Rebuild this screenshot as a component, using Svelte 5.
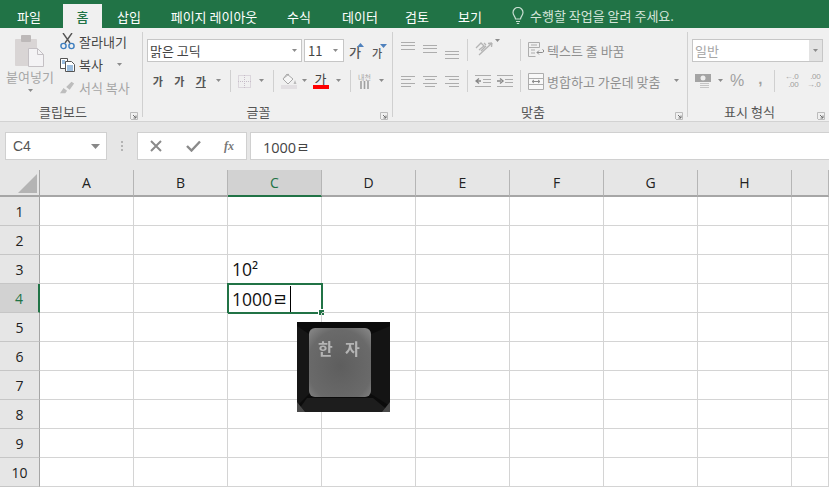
<script>
  const tabs = [
    { label: '파일', w: 58, gap: 5 },
    { label: '홈', w: 39, on: true },
    { label: '삽입', w: 54 },
    { label: '페이지 레이아웃', w: 116 },
    { label: '수식', w: 54 },
    { label: '데이터', w: 68 },
    { label: '검토', w: 46 },
    { label: '보기', w: 60 }
  ];
  const cols = ['A', 'B', 'C', 'D', 'E', 'F', 'G', 'H', ''];
  const rows = [1, 2, 3, 4, 5, 6, 7, 8, 9, 10];

  // three or four grey lines, the ribbon's alignment icons
  function alignLines(widths, anchor, top) {
    return widths.map((w, i) => {
      const x = anchor === 'c' ? (16 - w) / 2 : anchor === 'r' ? 15 - w : 1;
      return { x, y: top + Math.round(i * 3.4) + 0.5, w };
    });
  }
</script>

{#snippet arrow(x = 0)}
  <svg class="arr" style="margin-left:{x}px" width="7" height="4" viewBox="0 0 7 4"><path d="M1 0h5L3.500 3z" fill="#8c8c8c" /></svg>
{/snippet}

{#snippet launcher()}
  <svg class="launch" width="8" height="8" viewBox="0 0 8 8"><path d="M.5 7V.5H7.500V7.500H1" fill="none" stroke="#bcbcbc" /><path d="M3 3l3 3M6 3.500V6H3.500" fill="none" stroke="#707070" /></svg>
{/snippet}

{#snippet lines(widths, anchor, top)}
  <svg width="16" height="20" viewBox="0 0 16 20" fill="none" stroke="#adadad">
    {#each alignLines(widths, anchor, top) as l}
      <path d="M{l.x} {l.y}h{l.w}" />
    {/each}
  </svg>
{/snippet}

<div class="app">
  <nav class="tabs">
    {#each tabs as t}
      <span class="tab" class:on={t.on} style="width:{t.w}px;margin-right:{t.gap ?? 0}px">{t.label}</span>
    {/each}
    <span class="tell">
      <svg width="14" height="18" viewBox="0 0 14 18" fill="none" stroke="#c9dfd2" stroke-width="1.200"><path d="M4.500 12c0-2.500-2.500-3.500-2.500-6.500a5 5 0 0 1 10 0c0 3-2.500 4-2.500 6.500zM5 14.500h4M5.800 16.500h2.400" /></svg>
      수행할 작업을 알려 주세요.
    </span>
  </nav>

  <section class="ribbon">
    <div class="group g-clip">
      <div class="body clip">
        <div class="paste">
          <svg width="30" height="32" viewBox="0 0 30 32">
            <rect x="0" y="4" width="22" height="27" rx="1" fill="#d9d5d5" />
            <rect x="6" y="0" width="10" height="7" rx="1" fill="#bdb9b9" />
            <path d="M13.500 13.500h9l6 6v12h-15z" fill="#f4f3f5" stroke="#c4c0c4" />
            <path d="M22.500 13.500v6h6" fill="none" stroke="#c4c0c4" />
          </svg>
          <span>붙여넣기</span>
          {@render arrow()}
        </div>
        <div class="clip-list">
          <div class="on-item">
            <svg width="15" height="17" viewBox="0 0 15 17" fill="none"><path d="M3 0l7 10M12 0L5 10" stroke="#555" stroke-width="1.400" /><circle cx="3.500" cy="13" r="2.600" stroke="#3d7ebf" stroke-width="1.400" /><circle cx="11.500" cy="13" r="2.600" stroke="#3d7ebf" stroke-width="1.400" /></svg>
            잘라내기
          </div>
          <div class="on-item">
            <svg width="15" height="15" viewBox="0 0 15 15" fill="#fff" stroke="#555"><path d="M.5 1.500h7v10h-7z" /><path d="M5.500 4.500h6l3 3v7h-9z" /><path d="M7 9h6M7 11h6M7 13h6M2 4h3M2 6h3" stroke="#3d7ebf" /></svg>
            복사
            {@render arrow(9)}
          </div>
          <div class="off-item">
            <svg width="15" height="14" viewBox="0 0 17 14"><path d="M0 13l4-6 4 3-2 3zM7 6l6-6 3 2-5 7z" fill="#bdbdbd" /></svg>
            서식 복사
          </div>
        </div>
      </div>
      <footer class="f-clip">클립보드 {@render launcher()}</footer>
    </div>

    <div class="group g-font">
      <div class="body stack">
        <div class="row r-top">
          <span class="field font-name">맑은 고딕 {@render arrow()}</span>
          <span class="field font-size">11 {@render arrow()}</span>
          <span class="grow">
            가<svg width="7" height="4" viewBox="0 0 7 4"><path d="M0 4h7L3.500 0z" fill="#4f81bd" /></svg>
          </span>
          <span class="grow small">
            가<svg width="7" height="4" viewBox="0 0 7 4"><path d="M0 0h7L3.500 4z" fill="#4f81bd" /></svg>
          </span>
        </div>
        <div class="row r-low font-low">
          <b class="style">가</b>
          <i class="style">가</i>
          <u class="style">가</u>
          {@render arrow(3)}
          <span class="vsep"></span>
          <svg width="13" height="13" viewBox="0 0 13 13" fill="none" stroke="#c6bcc8" stroke-dasharray="1 1"><path d="M.5.5h12v12H.5zM6.500 0v13M0 6.500h13" /></svg>
          {@render arrow(7)}
          <span class="vsep"></span>
          <span class="paint">
            <svg width="16" height="12" viewBox="0 0 16 12" fill="#f6f6f6" stroke="#a8a8a8"><path d="M6 1l6 5-5 5-5-5zM3 5l5-4" /><path d="M14 7l1.500 4h-3z" fill="#bbb" stroke="none" /></svg>
            <i></i>
          </span>
          {@render arrow(4)}
          <span class="fcolor">가<i></i></span>
          {@render arrow(6)}
          <span class="vsep"></span>
          <span class="phon"><small>내천</small><svg width="11" height="8" viewBox="0 0 11 8" stroke="#a0a0a0" stroke-width="1.600"><path d="M2 0v8M5.500 0v8M9 0v8" /></svg></span>
          {@render arrow(6)}
        </div>
      </div>
      <footer class="f-font">글꼴 {@render launcher()}</footer>
    </div>

    <div class="group g-align">
      <div class="body stack">
        <div class="row r-top al-row">
          <span class="al">{@render lines([14, 14, 14], 'l', 3)}</span>
          <span class="al">{@render lines([14, 14, 14], 'l', 6)}</span>
          <span class="al">{@render lines([14, 14, 14], 'l', 12)}</span>
          <span class="vsep s-a"></span>
          <svg class="orient" width="18" height="17" viewBox="0 0 18 17" fill="none" stroke="#b4b4b4" stroke-width="1.300"><path d="M1 9l5-5 3 3-5 4M6 12l5-5M9 4l2 2M4 16L17 4M17 4l-4 .500M17 4l-.500 4" /></svg>
          {@render arrow(1)}
          <span class="vsep s-b"></span>
          <span class="wrap top">
            <svg width="16" height="16" viewBox="0 0 16 16" fill="none" stroke="#adadad"><path d="M.5.5h11v5H.5zM.5 5.500v9h7M3 3h6M3 8h4M3 11h4" /><path d="M9 10.500h5.500c1.500 0 1.500-3 0-3M11 8.500l-2 2 2 2" stroke="#8c8c8c" /></svg>
            텍스트 줄 바꿈
          </span>
        </div>
        <div class="row r-low al-row">
          <span class="al">{@render lines([14, 10, 14, 10], 'l', 5)}</span>
          <span class="al">{@render lines([14, 10, 14, 10], 'c', 5)}</span>
          <span class="al">{@render lines([14, 10, 14, 10], 'r', 5)}</span>
          <span class="vsep s-a"></span>
          <svg class="ind" width="16" height="12" viewBox="0 0 16 12" fill="none" stroke="#adadad"><path d="M0 .5h16M8 4.500h8M8 7.500h8M0 11.500h16" /><path d="M6 6H2M4 3.500L1 6l3 2.500" stroke="#888" stroke-width="1.400" /></svg>
          <svg class="ind" width="16" height="12" viewBox="0 0 16 12" fill="none" stroke="#adadad"><path d="M0 .5h16M8 4.500h8M8 7.500h8M0 11.500h16" /><path d="M0 6h4M3 3.500L6 6 3 8.500" stroke="#888" stroke-width="1.400" /></svg>
          <span class="vsep s-c"></span>
          <span class="wrap">
            <svg width="16" height="17" viewBox="0 0 16 17" fill="#f8f8f8" stroke="#adadad"><path d="M.5.5h15v16H.5zM.5 5.500h15M.5 11.500h15" /><path d="M4 8.500h8M4 8.500l2-1.500M4 8.500l2 1.500M12 8.500L10 7M12 8.500L10 10" stroke="#8c8c8c" fill="none" /></svg>
            병합하고 가운데 맞춤
            {@render arrow(10)}
          </span>
        </div>
      </div>
      <footer class="f-align">맞춤 {@render launcher()}</footer>
    </div>

    <div class="group g-num">
      <div class="body stack">
        <div class="row r-top">
          <span class="field num-field"><em>일반</em><span class="drop">{@render arrow()}</span></span>
        </div>
        <div class="row r-low num-low">
          <svg width="18" height="15" viewBox="0 0 18 15"><rect x="0" y="0" width="16" height="8" fill="#a4a4a4" /><circle cx="8" cy="4" r="2.500" fill="#eee" /><path d="M5 9.500h9M5 11.500h9M5 13.500h9" stroke="#c4c4c4" /></svg>
          {@render arrow(4)}
          <span class="pct">%</span>
          <span class="comma">,</span>
          <span class="vsep s-n"></span>
          <span class="dec"><small>←.0</small><small>.00</small></span>
          <span class="dec d2"><small>.00</small><small>→.0</small></span>
        </div>
      </div>
      <footer class="f-num">표시 형식 {@render launcher()}</footer>
    </div>
  </section>

  <section class="fbar">
    <div class="name">C4 <svg width="9" height="5" viewBox="0 0 9 5"><path d="M0 0h9L4.500 5z" fill="#888" /></svg></div>
    <span class="dots"><i></i><i></i><i></i></span>
    <div class="btns">
      <svg width="12" height="12" viewBox="0 0 12 12" stroke="#8a8a8a" stroke-width="2"><path d="M1 1l10 10M11 1L1 11" /></svg>
      <svg width="15" height="12" viewBox="0 0 15 12" fill="none" stroke="#8a8a8a" stroke-width="2.400"><path d="M1 6l4.500 4.500L14 1.500" /></svg>
      <span class="fx">fx</span>
    </div>
    <div class="input">1000ㄹ</div>
  </section>

  <section class="sheet">
    <span class="corner"><svg width="19" height="19" viewBox="0 0 19 19"><path d="M19 0v19H0z" fill="#b4b4b4" /></svg></span>
    {#each cols as c}
      <span class="ch" class:sel={c === 'C'}>{c}</span>
    {/each}
    {#each rows as r}
      <span class="rh" class:sel={r === 4}>{r}</span>
      {#each cols as c}
        <span class="cell">
          {#if c === 'C' && r === 3}10²{/if}
          {#if c === 'C' && r === 4}
            <span class="editor">1000ㄹ<i class="caret"></i><i class="handle"></i></span>
          {/if}
        </span>
      {/each}
    {/each}

    <svg class="key" width="93" height="90" viewBox="0 0 93 90">
      <defs>
        <radialGradient id="cap" cx="0.5" cy="0.55" r="0.75">
          <stop offset="0" stop-color="#5e5e5e" />
          <stop offset="0.7" stop-color="#6a6a6a" />
          <stop offset="1" stop-color="#8c8c8c" />
        </radialGradient>
      </defs>
      <rect width="93" height="90" fill="#0b0b0b" />
      <path d="M0 4L12 12V72L0 84z" fill="#161616" />
      <path d="M93 4L74 12V72L93 84z" fill="#141414" />
      <path d="M10 76H76L93 90H0z" fill="#1d1d1d" />
      <path d="M0 80L8 90H0zM93 80L85 90H93z" fill="#4a4a4a" />
      <rect x="12" y="6" width="62" height="69" rx="6" fill="url(#cap)" />
      <text x="21" y="33" class="kt">한</text>
      <text x="48" y="33" class="kt">자</text>
    </svg>
  </section>
</div>

<style>
  :global(body) {
    margin: 0;
    overflow: hidden;
  }
  .app {
    width: 829px;
    height: 487px;
    overflow: hidden;
    background: #e6e6e6;
    font-family: "Noto Sans CJK KR", "Liberation Sans", sans-serif;
    font-size: 13px;
    color: #444;
  }
  .tabs {
    display: flex;
    height: 28px;
    background: #217346;
    color: #fff;
  }
  .tab {
    display: flex;
    align-items: center;
    justify-content: center;
    margin-top: 4px;
    height: 24px;
    flex: none;
    box-sizing: border-box;
  }
  .tab.on {
    background: #f0f0f0;
    color: #217346;
    font-weight: 500;
  }
  .tell {
    display: flex;
    align-items: center;
    gap: 5px;
    margin-left: 11px;
    margin-top: 3px;
    color: #d4e5da;
  }
  .ribbon {
    display: flex;
    height: 89px;
    padding-top: 4px;
    background: #f0f0f0;
    border-bottom: 1px solid #d2d2d2;
  }
  .group {
    display: flex;
    flex-direction: column;
    height: 85px;
    border-right: 1px solid #d0d0d0;
    box-sizing: border-box;
    flex: none;
  }
  .g-clip { width: 143px; }
  .g-font { width: 250px; }
  .g-align { width: 295px; }
  .g-num { width: 141px; border-right: 0; }
  .body {
    flex: none;
    height: 70px;
  }
  svg {
    flex: none;
  }
  footer {
    position: relative;
    flex: none;
    height: 20px;
    text-align: center;
    line-height: 19px;
    color: #555;
  }
  .f-clip { padding-right: 16px; }
  .f-font { padding-right: 18px; }
  .f-align { padding-right: 14px; }
  .f-num { padding-right: 18px; }
  .launch {
    position: absolute;
    right: 4px;
    top: 10px;
  }
  .clip {
    display: flex;
  }
  .paste {
    width: 60px;
    display: flex;
    flex-direction: column;
    align-items: center;
    padding-top: 3px;
    color: #a6a6a6;
    box-sizing: border-box;
  }
  .paste span {
    margin-top: 1px;
    line-height: 18px;
  }
  .paste .arr {
    margin-top: 3px;
  }
  .clip-list {
    display: flex;
    flex-direction: column;
    margin-top: -2px;
  }
  .on-item, .off-item {
    display: flex;
    align-items: center;
    height: 23px;
    gap: 4px;
    white-space: nowrap;
  }
  .on-item { color: #444; }
  .off-item { color: #a6a6a6; }
  .stack {
    display: flex;
    flex-direction: column;
  }
  .row {
    display: flex;
    align-items: center;
    flex: none;
  }
  .r-top {
    height: 30px;
    margin-top: 7px;
    padding-left: 4px;
    align-items: flex-start;
  }
  .r-low {
    height: 24px;
    padding-left: 4px;
  }
  .field {
    display: flex;
    align-items: center;
    box-sizing: border-box;
    height: 23px;
    background: #fff;
    border: 1px solid #c6c6c6;
    color: #444;
  }
  .font-name {
    width: 155px;
    justify-content: space-between;
    padding: 0 3px 0 2px;
  }
  .font-size {
    width: 40px;
    margin-left: 2px;
    justify-content: space-between;
    padding: 0 4px 0 3px;
  }
  .grow {
    display: flex;
    position: relative;
    width: 13px;
    margin-left: 5px;
    margin-top: 4px;
    font-size: 13px;
    font-weight: 500;
    line-height: 18px;
    color: #555;
  }
  .grow svg {
    position: absolute;
    right: -2px;
    top: 0;
  }
  .grow.small {
    margin-left: 10px;
    font-size: 11px;
    top: 1px;
  }
  .style {
    width: 21.500px;
    text-align: center;
    font-size: 11px;
    font-weight: 700;
    font-style: normal;
    color: #555;
    text-decoration: none;
    flex: none;
  }
  u.style {
    text-decoration: underline;
  }
  .vsep {
    width: 1px;
    height: 22px;
    background: #d0d0d0;
    margin: 0 7px 0 8px;
    flex: none;
  }
  .paint {
    display: flex;
    flex-direction: column;
    width: 16px;
    flex: none;
  }
  .paint i {
    height: 4px;
    background: #e2dfe2;
  }
  .fcolor {
    display: flex;
    flex-direction: column;
    align-items: center;
    width: 16px;
    margin-left: 5px;
    font-size: 13px;
    line-height: 12px;
    color: #444;
    flex: none;
  }
  .fcolor i {
    width: 16px;
    height: 4px;
    background: #f00;
  }
  .phon {
    display: flex;
    flex-direction: column;
    align-items: center;
    width: 14px;
    color: #a6a6a6;
    flex: none;
  }
  .phon small {
    font-size: 7px;
    line-height: 8px;
  }
  .al {
    display: flex;
    width: 22px;
    justify-content: center;
    flex: none;
  }
  .al-row .vsep.s-a { margin: 0 7px 0 4px; }
  .al-row .vsep.s-b { margin: 0 7px 0 19px; }
  .al-row .vsep.s-c { margin: 0 7px 0 1px; }
  .ind { margin-right: 6px; }
  .wrap {
    display: flex;
    align-items: center;
    gap: 3px;
    height: 20px;
    color: #909090;
    white-space: nowrap;
  }
  .wrap.top {
    margin-top: 1px;
  }
  .num-field {
    width: 131px;
    justify-content: space-between;
    padding-left: 2px;
  }
  .num-field em {
    font-style: normal;
    color: #a6a6a6;
  }
  .drop {
    display: flex;
    align-items: center;
    justify-content: center;
    width: 13px;
    height: 21px;
    background: #e3e3e3;
  }
  .num-low {
    padding-left: 7px;
    color: #a0a0a0;
  }
  .pct {
    margin-left: 6px;
    font: 16px "Liberation Sans", sans-serif;
  }
  .comma {
    margin-left: 14px;
    font: 700 15px "Liberation Sans", sans-serif;
    position: relative;
    top: -3px;
  }
  .vsep.s-n {
    margin: 0 8px 0 12px;
  }
  .dec {
    display: flex;
    flex-direction: column;
    width: 15px;
    font-family: "Liberation Sans", sans-serif;
    text-align: right;
    white-space: nowrap;
  }
  .d2 {
    margin-left: 7px;
  }
  .dec small {
    font-size: 8px;
    line-height: 8px;
    letter-spacing: -0.3px;
  }
  .fbar {
    display: flex;
    align-items: stretch;
    height: 28px;
    margin-top: 10px;
    padding-left: 5px;
  }
  .name, .btns, .input {
    box-sizing: border-box;
    background: #fff;
    border: 1px solid #d0d0d0;
    display: flex;
    align-items: center;
  }
  .name {
    width: 102px;
    justify-content: space-between;
    padding: 0 6px 0 7px;
    font: 14px "Liberation Sans", sans-serif;
    color: #555;
  }
  .dots {
    display: flex;
    flex-direction: column;
    justify-content: center;
    gap: 2px;
    width: 30px;
    align-items: center;
  }
  .dots i {
    width: 2px;
    height: 2px;
    background: #b4b4b4;
  }
  .btns {
    width: 110px;
    justify-content: space-between;
    padding: 0 12px;
  }
  .fx {
    font: italic 700 12px "Liberation Serif", serif;
    color: #777;
  }
  .input {
    flex: 1;
    margin-left: 3px;
    padding-left: 12px;
    border-right: 0;
    color: #444;
    font-family: "Open Sans", "Noto Sans CJK KR", sans-serif;
    font-size: 14.500px;
  }
  .sheet {
    position: relative;
    display: grid;
    grid-template-columns: 40px repeat(8, 94px) 1fr;
    grid-template-rows: 27px repeat(10, 29px);
    margin-top: 10px;
    background: #fff;
    font-family: "Open Sans", "Noto Sans CJK KR", sans-serif;
  }
  .corner {
    display: flex;
    align-items: flex-end;
    justify-content: flex-end;
    background: #e6e6e6;
    border-right: 1px solid #a6a6a6;
    border-bottom: 2px solid #a6a6a6;
    padding: 0 2px 2px 0;
    box-sizing: border-box;
  }
  .ch {
    display: flex;
    align-items: center;
    justify-content: center;
    background: #e6e6e6;
    border-right: 1px solid #b5b5b5;
    border-bottom: 2px solid #a6a6a6;
    box-sizing: border-box;
    font-size: 14px;
    color: #222;
  }
  .ch.sel {
    background: #d2d2d2;
    border-bottom-color: #217346;
    color: #217346;
  }
  .rh {
    display: flex;
    align-items: center;
    justify-content: center;
    background: #e6e6e6;
    border-right: 1px solid #a6a6a6;
    border-bottom: 1px solid #c6c6c6;
    box-sizing: border-box;
    font-size: 14px;
    color: #222;
  }
  .rh.sel {
    background: #d2d2d2;
    color: #217346;
    border-right: 2px solid #217346;
  }
  .cell {
    position: relative;
    display: flex;
    align-items: center;
    padding-left: 4px;
    box-sizing: border-box;
    border-right: 1px solid #d4d4d4;
    border-bottom: 1px solid #d4d4d4;
    font-size: 17.500px;
    color: #111;
  }
  .editor {
    position: absolute;
    left: -1px;
    top: -1px;
    width: 96px;
    height: 31px;
    box-sizing: border-box;
    display: flex;
    align-items: center;
    padding-left: 3px;
    background: #fff;
    border: 2px solid #217346;
    white-space: pre;
  }
  .caret {
    width: 1px;
    height: 26px;
    margin-left: 2px;
    background: #000;
  }
  .handle {
    position: absolute;
    right: -3px;
    bottom: -3px;
    width: 5px;
    height: 5px;
    background: #217346;
    border: 1px solid #fff;
    border-width: 1px 0 0 1px;
  }
  .key {
    position: absolute;
    left: 297px;
    top: 152px;
    z-index: 2;
  }
  .kt {
    font: 700 16px "Noto Sans CJK KR", sans-serif;
    fill: #b4b4b4;
    filter: blur(0.4px);
  }
</style>
